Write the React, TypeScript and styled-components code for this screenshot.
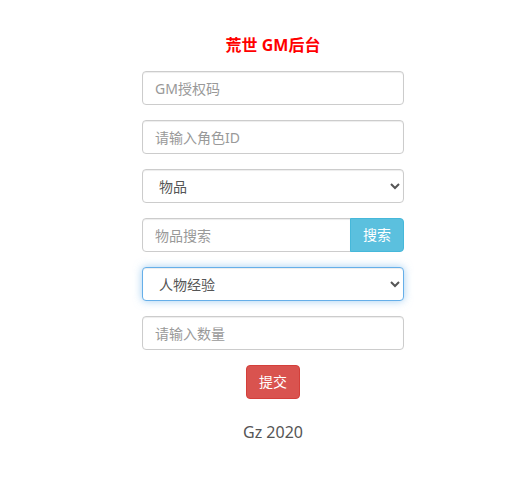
import React from "react";
import styled, { createGlobalStyle, css } from "styled-components";

const GlobalStyle = createGlobalStyle`
  html, body { margin: 0; padding: 0; background: #fff; }
  body {
    margin: 8px;
    font-family: "Noto Sans", "Noto Sans CJK SC", sans-serif;
    font-size: 14px;
    color: #333;
  }
  * { box-sizing: border-box; }
`;

const Page = styled.div`
  padding: 26px 0 0 15px;
  display: flex;
  flex-direction: column;
  align-items: center;
`;

const Title = styled.h3`
  margin: 0 0 15px;
  font-size: 16px;
  line-height: 22px;
  font-weight: 700;
  color: #f00;
  font-family: "Noto Sans", "Noto Sans CJK SC", sans-serif;
`;

const Form = styled.form`
  width: 262px;
  display: flex;
  flex-direction: column;
  gap: 15px;
  align-items: center;
`;

const fieldBase = css`
  height: 34px;
  padding: 6px 12px;
  font-size: 14px;
  line-height: 20px;
  color: #555;
  background: #fff;
  border: 1px solid #ccc;
  box-shadow: inset 0 1px 1px rgba(0, 0, 0, 0.075);
  font-family: "Noto Sans", "Noto Sans CJK SC", sans-serif;
  outline: none;
  &::placeholder { color: #999; }
`;

const TextInput = styled.input<{ $grouped?: boolean }>`
  ${fieldBase}
  width: 100%;
  border-radius: ${(p) => (p.$grouped ? "4px 0 0 4px" : "4px")};
  ${(p) => p.$grouped && css`flex: 1; min-width: 0;`}
`;

const Select = styled.select<{ $focused?: boolean }>`
  ${fieldBase}
  width: 100%;
  border-radius: 4px;
  ${(p) =>
    p.$focused &&
    css`
      border-color: #66afe9;
      box-shadow: inset 0 1px 1px rgba(0, 0, 0, 0.075), 0 0 8px rgba(102, 175, 233, 0.6);
    `}
`;

const Group = styled.div`
  display: flex;
  width: 100%;
`;

const Button = styled.button<{ $variant: "info" | "danger"; $grouped?: boolean }>`
  height: 34px;
  padding: 6px 12px;
  font-size: 14px;
  line-height: 20px;
  color: #fff;
  border: 1px solid;
  font-family: "Noto Sans", "Noto Sans CJK SC", sans-serif;
  white-space: nowrap;
  cursor: pointer;
  border-radius: ${(p) => (p.$grouped ? "0 4px 4px 0" : "4px")};
  ${(p) =>
    p.$variant === "info"
      ? css`background: #5bc0de; border-color: #46b8da; margin-left: -1px;`
      : css`background: #d9534f; border-color: #d43f3a;`}
`;

const Footer = styled.p`
  margin: 22px 0 0;
  font-size: 16px;
  line-height: 22px;
  color: #555;
`;

export default function App() {
  return (
    <>
      <GlobalStyle />
      <Page>
        <Title>荒世 GM后台</Title>
        <Form onSubmit={(e) => e.preventDefault()}>
          <TextInput placeholder="GM授权码" />
          <TextInput placeholder="请输入角色ID" />
          <Select defaultValue="item">
            <option value="item">物品</option>
          </Select>
          <Group>
            <TextInput $grouped placeholder="物品搜索" />
            <Button type="button" $variant="info" $grouped>搜索</Button>
          </Group>
          <Select $focused defaultValue="exp">
            <option value="exp">人物经验</option>
          </Select>
          <TextInput placeholder="请输入数量" />
          <Button type="submit" $variant="danger">提交</Button>
        </Form>
        <Footer>Gz 2020</Footer>
      </Page>
    </>
  );
}
